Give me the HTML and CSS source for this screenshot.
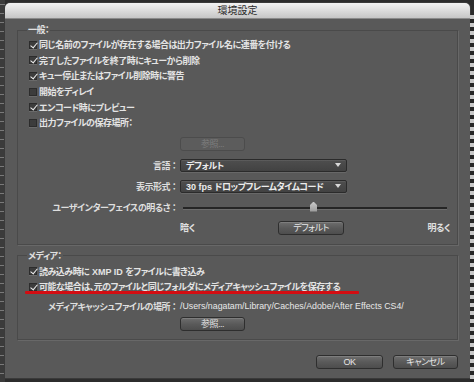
FILE: index.html
```html
<!DOCTYPE html>
<html lang="ja">
<head>
<meta charset="utf-8">
<title>環境設定</title>
<link rel="stylesheet" href="styles.css">
</head>
<body>
<div class="screen">
  <div class="strip-left"></div>
  <div class="dialog">
    <div class="titlebar">環境設定</div>
    <div class="dialog-body">
      <fieldset class="group general">
        <legend>一般：</legend>
        <div class="check"><span class="cb on"></span><span>同じ名前のファイルが存在する場合は出力ファイル名に連番を付ける</span></div>
        <div class="check"><span class="cb on"></span><span>完了したファイルを終了時にキューから削除</span></div>
        <div class="check"><span class="cb on"></span><span>キュー停止またはファイル削除時に警告</span></div>
        <div class="check"><span class="cb"></span><span>開始をディレイ</span></div>
        <div class="check"><span class="cb on"></span><span>エンコード時にプレビュー</span></div>
        <div class="check"><span class="cb"></span><span>出力ファイルの保存場所：</span></div>
        <div class="form">
          <span></span>
          <div class="ctl"><span class="btn btn-browse disabled">参照...</span></div>
          <span class="lbl">言語 ：</span>
          <div class="ctl"><div class="select"><span>デフォルト</span><span class="arrow"></span></div></div>
          <span class="lbl">表示形式 ：</span>
          <div class="ctl"><div class="select"><span><span class="lat">30 fps </span>ドロップフレームタイムコード</span><span class="arrow"></span></div></div>
          <span class="lbl">ユーザインターフェイスの明るさ ：</span>
          <div class="ctl"><div class="slider"><span class="track"></span><span class="knob"></span></div></div>
          <span></span>
          <div class="ctl bright-row"><span class="hint">暗く</span><span class="btn btn-default">デフォルト</span><span class="hint">明るく</span></div>
        </div>
      </fieldset>
      <fieldset class="group media">
        <legend>メディア：</legend>
        <div class="check"><span class="cb on"></span><span>読み込み時に<span class="lat"> XMP ID </span>をファイルに書き込み</span></div>
        <div class="check marked"><span class="cb on"></span><span>可能な場合は、元のファイルと同じフォルダにメディアキャッシュファイルを保存する</span></div>
        <div class="form form-media">
          <span class="lbl">メディアキャッシュファイルの場所 ：</span>
          <div class="ctl path">/Users/nagatam/Library/Caches/Adobe/After Effects CS4/</div>
          <span></span>
          <div class="ctl"><span class="btn btn-browse">参照...</span></div>
        </div>
      </fieldset>
      <div class="footer">
        <span class="btn btn-ok">OK</span>
        <span class="btn btn-cancel">キャンセル</span>
      </div>
    </div>
  </div>
  <div class="strip-right"></div>
</div>
</body>
</html>
```
FILE: styles.css
```css
* { box-sizing: border-box; }
html, body { margin: 0; padding: 0; }
body {
  width: 474px;
  height: 382px;
  overflow: hidden;
  background: #2c2c2c;
  font-family: "Liberation Sans", "Noto Sans CJK JP", sans-serif;
  font-size: 9px;
  letter-spacing: -0.5px;
  font-weight: 700;
  color: #e4e4e4;
  font-feature-settings: "palt";
}
.lat { letter-spacing: 0; }
.screen {
  display: flex;
  height: 382px;
}
.strip-left {
  width: 5px;
  background:
    repeating-linear-gradient(180deg, #3b3b3b 0 4px, #7a7a7a 4px 5px, #3b3b3b 5px 9px);
}
.strip-right {
  width: 4px;
  background: repeating-linear-gradient(180deg, #c8c8c8 0 4px, #262626 4px 8px);
  margin-top: 15px;
}
.dialog {
  width: 465px;
  height: 375px;
  margin-top: 3px;
  background: #595959;
  border-radius: 5px 5px 0 0;
  box-shadow: 0 0 0 1px #3a3a3a;
  display: flex;
  flex-direction: column;
}
.titlebar {
  height: 16px;
  line-height: 16px;
  text-align: center;
  font-weight: 400;
  font-size: 10px;
  letter-spacing: 0;
  color: #2a2a2a;
  border-radius: 5px 5px 0 0;
  background: linear-gradient(180deg, #f2f2f2 0%, #dadada 55%, #c6c6c6 100%);
  border-bottom: 1px solid #8a8a8a;
}
.dialog-body {
  padding: 5px 12px 0 12px;
}
.group {
  margin: 0;
  padding: 1px 11px 0 11px;
  border: 1px solid #4a4a4a;
  box-shadow: 1px 1px 0 #686868;
  min-width: 0;
}
.group legend {
  padding: 0 1px;
  margin-left: -2px;
  line-height: 12px;
  height: 12px;
  color: #e0e0e0;
}
.general { padding-bottom: 8px; }
.media { margin-top: 5px; padding-top: 2px; padding-bottom: 8px; }

.check {
  display: flex;
  align-items: center;
  height: 15.6px;
  gap: 2px;
  white-space: nowrap;
}
.cb {
  position: relative;
  width: 8px;
  height: 8px;
  flex: none;
  background: #3c3c3c;
  border: 1px solid #2c2c2c;
  box-shadow: 0 1px 0 #6a6a6a;
}
.cb.on::after {
  content: "";
  position: absolute;
  left: 2px;
  top: -1px;
  width: 3px;
  height: 6px;
  border: solid #f0f0f0;
  border-width: 0 1.5px 1.5px 0;
  transform: rotate(40deg);
}
.marked { position: relative; }
.marked::after {
  content: "";
  position: absolute;
  left: -4px;
  top: 12px;
  width: 334px;
  height: 3px;
  background: #d30d12;
  border-radius: 1px;
}

.form {
  display: grid;
  grid-template-columns: 147px 1fr;
  column-gap: 4px;
  grid-template-rows: 14px 13px 13px 13px 14px;
  row-gap: 8px;
  margin-top: 6px;
  align-items: center;
}
.form-media {
  grid-template-rows: 15px 14px;
  row-gap: 3px;
  margin-top: 4px;
}
.lbl {
  text-align: right;
  white-space: nowrap;
  color: #dedede;
}
.ctl { display: flex; align-items: center; min-width: 0; }
.path {
  font-weight: 400;
  font-size: 8.8px;
  letter-spacing: 0;
  color: #e8e8e8;
  white-space: nowrap;
}

.btn {
  display: inline-flex;
  align-items: center;
  justify-content: center;
  height: 14px;
  border: 1px solid #2e2e2e;
  border-radius: 3px;
  background: linear-gradient(180deg, #6e6e6e 0%, #5a5a5a 50%, #4d4d4d 100%);
  box-shadow: inset 0 1px 0 rgba(255,255,255,0.12);
  color: #e6e6e6;
  font-weight: 400;
  white-space: nowrap;
}
.btn.disabled {
  background: #5c5c5c;
  border-color: #4c4c4c;
  box-shadow: none;
  color: #7e7e7e;
}
.btn-browse { width: 65px; }
.btn-default { width: 66px; }
.btn-ok { width: 67px; }
.btn-cancel { width: 65px; }

.select {
  width: 167px;
  height: 13px;
  border: 1px solid #2b2b2b;
  border-radius: 2px;
  background: linear-gradient(180deg, #4e4e4e 0%, #424242 100%);
  box-shadow: inset 0 1px 0 rgba(255,255,255,0.08), 0 1px 0 #686868;
  display: flex;
  align-items: center;
  justify-content: space-between;
  padding: 0 5px 0 5px;
  color: #ececec;
  white-space: nowrap;
}
.arrow {
  width: 0;
  height: 0;
  border-left: 3px solid transparent;
  border-right: 3px solid transparent;
  border-top: 4px solid #d8d8d8;
}

.slider {
  position: relative;
  width: 270px;
  height: 13px;
}
.track {
  position: absolute;
  left: 3px;
  right: 3px;
  top: 6px;
  height: 2px;
  background: #252525;
  box-shadow: 0 1px 0 #6c6c6c;
}
.knob {
  position: absolute;
  left: 130px;
  top: 1px;
  width: 7px;
  height: 10px;
  background: linear-gradient(180deg, #c9c9c9, #9a9a9a);
  clip-path: polygon(50% 0, 100% 35%, 100% 100%, 0 100%, 0 35%);
}
.bright-row {
  width: 270px;
  justify-content: space-between;
  margin-top: -2px;
}
.hint { color: #e0e0e0; }

.footer {
  display: flex;
  justify-content: flex-end;
  gap: 10px;
  margin-top: 15px;
}
```
